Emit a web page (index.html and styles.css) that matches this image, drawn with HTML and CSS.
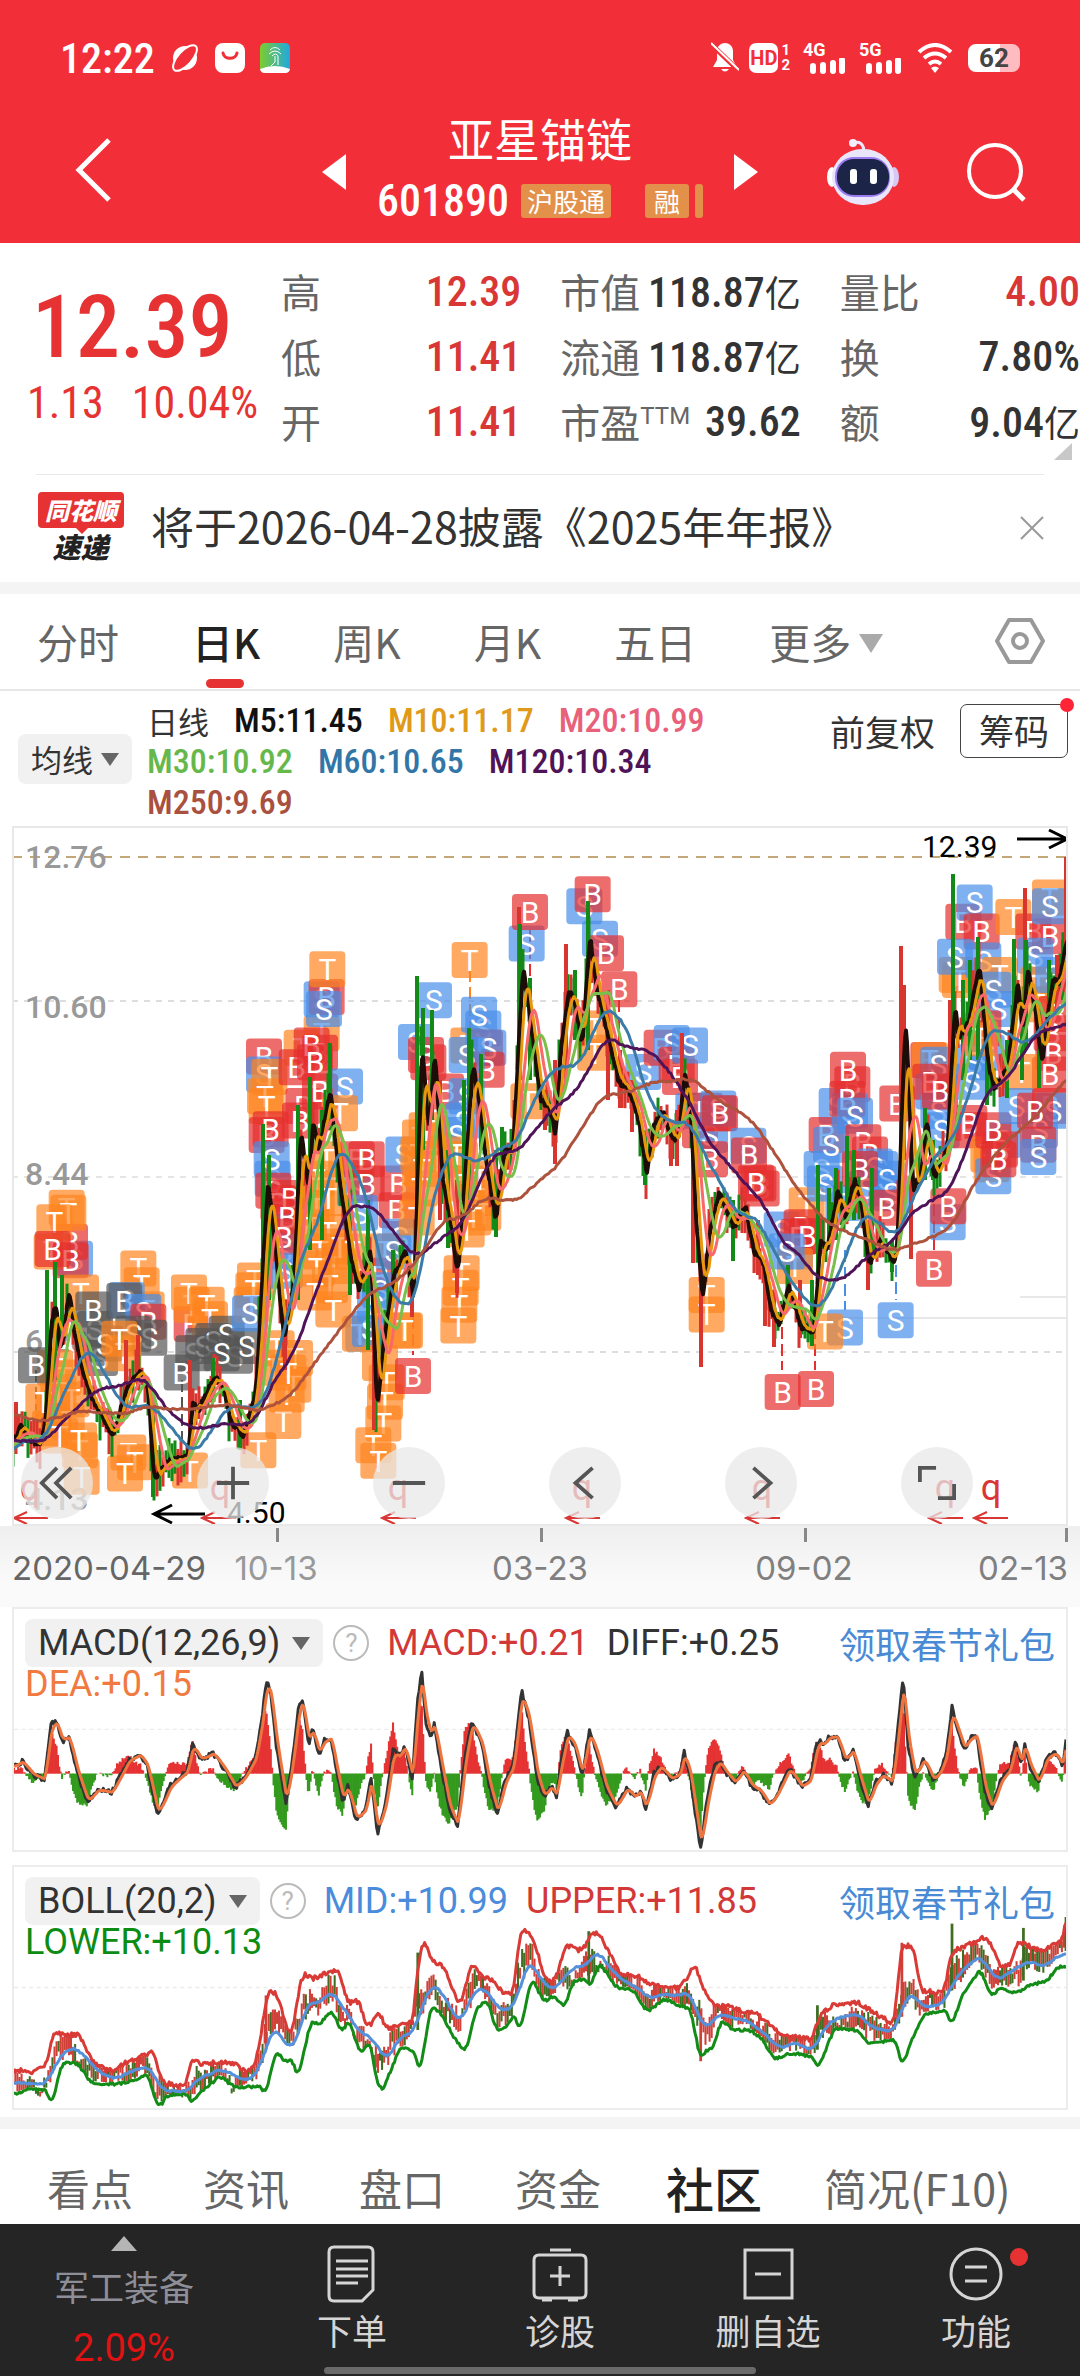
FILE: index.html
```
<!DOCTYPE html>
<html lang="zh-CN">
<head>
    <meta charset="UTF-8">
    <meta name="viewport" content="width=device-width, initial-scale=1.0">
    <title>亚星锚链 601890</title>
    <link rel="stylesheet" href="styles.css">
</head>
<body>
    <header class="top">
        <div class="status-bar">
            <span class="clock">12:22</span>
            <svg width="30" height="30" viewBox="0 0 30 30"><circle cx="15" cy="15" r="12" fill="#fff"/><ellipse cx="15" cy="15" rx="16" ry="7" transform="rotate(-48 15 15)" fill="#f22f38" stroke="#fff" stroke-width="2"/></svg>
            <svg width="30" height="30" viewBox="0 0 30 30"><rect width="30" height="30" rx="8" fill="#fff"/><path d="M8 10c1 7 13 7 14 0" fill="none" stroke="#f22f38" stroke-width="3" stroke-linecap="round"/></svg>
            <svg width="30" height="30" viewBox="0 0 30 30">
                <defs><linearGradient id="app"><stop offset="0" stop-color="#7dcc2e"/><stop offset="1" stop-color="#1fa9e0"/></linearGradient></defs>
                <rect width="30" height="30" rx="5" fill="url(#app)"/><path d="M0 26q15-6 30 0a5 5 0 0 1-5 4H5a5 5 0 0 1-5-4z" fill="#fff"/>
                <path d="M10 7q5-5 10 0M9 11q6-6 12 0M12 13q4-4 6 0v9M15 13v6l-4 4" fill="none" stroke="#fff"/>
            </svg>
            <span class="spacer"></span>
            <svg width="28" height="32" viewBox="0 0 28 32"><path d="M14 1c-4 0-8 3-8 8v9l-4 7h24l-4-7V9c0-5-4-8-8-8zM10 27q4 5 8 0z" fill="#fff"/><path d="M1 3l26 25" stroke="#f22f38" stroke-width="5"/><path d="M0 1l28 27" stroke="#fff" stroke-width="2"/></svg>
            <span class="hd">HD</span><span class="sims"><i>1</i><i>2</i></span>
            <span class="signal"><b>4G</b><svg width="36" height="16" viewBox="0 0 36 16"><path d="M3 13v-5M13 13V7M23 13V5M32 13V2" stroke="#fff" stroke-width="6" stroke-linecap="round"/></svg></span>
            <span class="signal"><b>5G</b><svg width="36" height="16" viewBox="0 0 36 16"><path d="M3 13v-5M13 13V7M23 13V5M32 13V2" stroke="#fff" stroke-width="6" stroke-linecap="round"/></svg></span>
            <svg width="36" height="30" viewBox="0 0 36 30"><path d="M2 9q16-14 32 0M7 15q11-9 22 0M12 21q6-5 12 0" fill="none" stroke="#fff" stroke-width="4"/><path d="M14 25q4-3 8 0l-4 5z" fill="#fff"/></svg>
            <span class="battery">62</span>
        </div>
        <div class="title-bar">
            <button class="back" aria-label="返回"><svg width="40" height="68" viewBox="0 0 40 68"><path d="M36 4L6 34l30 30" fill="none" stroke="#fff" stroke-width="5"/></svg></button>
            <div class="stock-nav">
                <button aria-label="上一只"><svg width="24" height="36" viewBox="0 0 24 36"><path d="M24 0v36L0 18z" fill="#fff"/></svg></button>
                <div class="stock">
                    <h1>亚星锚链</h1>
                    <div class="code"><span>601890</span><em>沪股通</em><em class="margin-tag">融</em><em class="cut"></em></div>
                </div>
                <button aria-label="下一只"><svg width="24" height="36" viewBox="0 0 24 36"><path d="M0 0v36l24-18z" fill="#fff"/></svg></button>
            </div>
            <button class="robot" aria-label="智能助手">
                <svg width="72" height="68" viewBox="0 0 72 68">
                    <path d="M26 5q10-3 11 8" fill="none" stroke="#eee8fb" stroke-width="3"/><circle cx="26" cy="5" r="4" fill="#f3eefb"/>
                    <ellipse cx="5" cy="39" rx="5" ry="10" fill="#fff"/><ellipse cx="67" cy="39" rx="5" ry="10" fill="#d5c8f5"/>
                    <rect x="5" y="11" width="62" height="56" rx="30" fill="#e9e5fb"/>
                    <rect x="8" y="19" width="55" height="40" rx="19" fill="#9b7bf0"/><rect x="10" y="21" width="52" height="36" rx="17" fill="#1c2548"/>
                    <rect x="23" y="31" width="7" height="15" rx="3" fill="#fff"/><rect x="43" y="31" width="7" height="15" rx="3" fill="#fff"/>
                </svg>
            </button>
            <button aria-label="搜索"><svg width="60" height="60" viewBox="0 0 60 60"><circle cx="29" cy="29" r="26" fill="none" stroke="#fff" stroke-width="4"/><path d="M47 47l11 11" stroke="#fff" stroke-width="5"/></svg></button>
        </div>
    </header>

    <section class="quote">
        <div class="price">
            <strong>12.39</strong>
            <div><span>1.13</span><span>10.04%</span></div>
        </div>
        <dl class="stats">
            <div><dt>高</dt><dd class="up">12.39</dd></div>
            <div><dt>市值</dt><dd>118.87<small>亿</small></dd></div>
            <div><dt>量比</dt><dd class="up">4.00</dd></div>
            <div><dt>低</dt><dd class="up">11.41</dd></div>
            <div><dt>流通</dt><dd>118.87<small>亿</small></dd></div>
            <div><dt>换</dt><dd>7.80%</dd></div>
            <div><dt>开</dt><dd class="up">11.41</dd></div>
            <div><dt>市盈<sup>TTM</sup></dt><dd>39.62</dd></div>
            <div><dt>额</dt><dd>9.04<small>亿</small></dd></div>
        </dl>
        <svg class="corner" width="18" height="17" viewBox="0 0 18 17"><path d="M18 0v17H0z" fill="#c8c8c8"/></svg>
    </section>

    <section class="notice">
        <div class="notice-logo"><b>同花顺</b><i>速递</i></div>
        <a href="#">将于2026-04-28披露《2025年年报》</a>
        <button aria-label="关闭"><svg width="24" height="24" viewBox="0 0 24 24"><path d="M1 1l22 22M23 1L1 23" stroke="#999" stroke-width="2"/></svg></button>
    </section>

    <nav class="period-tabs">
        <a href="#">分时</a>
        <a href="#" class="active">日K</a>
        <a href="#">周K</a>
        <a href="#">月K</a>
        <a href="#">五日</a>
        <a href="#" class="more">更多<svg width="24" height="19" viewBox="0 0 24 19"><path d="M0 0h24L12 19z" fill="#aaa"/></svg></a>
        <button aria-label="设置"><svg width="50" height="46" viewBox="0 0 50 46"><path d="M14 2h22l12 21-12 21H14L2 23z" fill="none" stroke="#999" stroke-width="4" stroke-linejoin="round"/><circle cx="25" cy="23" r="7" fill="none" stroke="#999" stroke-width="4"/></svg></button>
    </nav>

    <section class="ma-bar">
        <button class="picker">均线<svg width="18" height="13" viewBox="0 0 18 13"><path d="M0 0h18L9 13z" fill="#666"/></svg></button>
        <div class="ma-list">
            <span>日线</span>
            <span class="m5">M5:11.45</span>
            <span class="m10">M10:11.17</span>
            <span class="m20">M20:10.99</span>
            <span class="m30">M30:10.92</span>
            <span class="m60">M60:10.65</span>
            <span class="m120">M120:10.34</span>
            <span class="m250">M250:9.69</span>
        </div>
        <button class="adjust">前复权</button>
        <button class="chips">筹码</button>
    </section>

    <section class="kline">
        <svg id="kline" viewBox="12 826 1056 700"></svg>
        <div class="chart-tools">
            <button aria-label="最左"><svg viewBox="0 0 40 40"><path d="M20 4L4 20l16 16M35 4L19 20l16 16"/></svg></button>
            <button aria-label="放大"><svg viewBox="0 0 40 40"><path d="M20 3v34M3 20h34"/></svg></button>
            <button aria-label="缩小"><svg viewBox="0 0 40 40"><path d="M3 20h34"/></svg></button>
            <button aria-label="左移"><svg viewBox="0 0 40 40"><path d="M28 4L10 20l18 16"/></svg></button>
            <button aria-label="右移"><svg viewBox="0 0 40 40"><path d="M12 4l18 16-18 16"/></svg></button>
            <button aria-label="全屏"><svg viewBox="0 0 40 40"><path d="M2 19V4h17M38 21v15H21"/></svg></button>
        </div>
    </section>
    <div class="dates">
        <span>2020-04-29</span><span>10-13</span><span>03-23</span><span>09-02</span><span>02-13</span>
    </div>

    <section class="panel">
        <svg id="macd" viewBox="18 80 1532 735" preserveAspectRatio="none"></svg>
        <div class="panel-head">
            <button class="picker">MACD(12,26,9)<svg width="18" height="13" viewBox="0 0 18 13"><path d="M0 0h18L9 13z" fill="#666"/></svg></button>
            <button class="help">?</button>
            <span class="red">MACD:+0.21</span>
            <span>DIFF:+0.25</span>
            <a href="#">领取春节礼包</a>
        </div>
        <div class="panel-sub orange">DEA:+0.15</div>
    </section>

    <section class="panel">
        <svg id="boll" viewBox="18 45 1532 732" preserveAspectRatio="none"></svg>
        <div class="panel-head">
            <button class="picker">BOLL(20,2)<svg width="18" height="13" viewBox="0 0 18 13"><path d="M0 0h18L9 13z" fill="#666"/></svg></button>
            <button class="help">?</button>
            <span class="blue">MID:+10.99</span>
            <span class="red">UPPER:+11.85</span>
            <a href="#">领取春节礼包</a>
        </div>
        <div class="panel-sub green">LOWER:+10.13</div>
    </section>

    <nav class="info-tabs">
        <a href="#">看点</a>
        <a href="#">资讯</a>
        <a href="#">盘口</a>
        <a href="#">资金</a>
        <a href="#" class="active">社区</a>
        <a href="#" class="last">简况(F10)</a>
    </nav>

    <footer class="bottom-bar">
        <a href="#" class="sector">
            <svg width="26" height="15" viewBox="0 0 26 15"><path d="M13 0l13 15H0z" fill="#b5b5b5"/></svg>
            <span>军工装备</span>
            <b>2.09%</b>
        </a>
        <button><svg width="56" height="60" viewBox="0 0 56 60"><path d="M10 3h34q5 0 5 5v38L38 57H10q-5 0-5-5V8q0-5 5-5zM12 17h32M12 25h32M12 32h32M12 39h22"/></svg>下单</button>
        <button><svg width="56" height="60" viewBox="0 0 56 60"><path d="M18 6h21M7 11h42q5 0 5 5v33q0 5-5 5H7q-5 0-5-5V16q0-5 5-5zM28 22v20M18 32h20M10 56h10M36 56h10"/></svg>诊股</button>
        <button><svg width="56" height="60" viewBox="0 0 56 60"><path d="M5 6h47v48H5zM15 30h26"/></svg>删自选</button>
        <button class="dot"><svg width="56" height="60" viewBox="0 0 56 60"><circle cx="28" cy="30" r="25"/><path d="M17 23h22M17 37h22"/></svg>功能</button>
        <i class="home-bar"></i>
    </footer>
    <script src="chart.js"></script>
</body>
</html>
```
FILE: styles.css
```
* {
    box-sizing: border-box;
}

body {
    margin: 0;
    font-family: Roboto, 'Noto Sans CJK SC', sans-serif;
    background: #fff;
    color: #333;
}

button {
    border: none;
    background: none;
    padding: 0;
    color: inherit;
    font: inherit;
    display: flex;
    align-items: center;
    justify-content: center;
}

a {
    color: inherit;
    text-decoration: none;
}

h1, dl, dd {
    margin: 0;
}

i, em {
    font-style: normal;
}

/* header */
.top {
    background: #f22f38;
    color: #fff;
    height: 243px;
    padding-top: 38px;
}

.status-bar {
    display: flex;
    align-items: center;
    gap: 15px;
    height: 40px;
    padding: 0 60px;
}

.clock {
    font: 500 42px 'Roboto Condensed', sans-serif;
}

.spacer {
    flex: 1;
}

.hd {
    background: #fff;
    color: #f22f38;
    border-radius: 7px;
    font: 700 20px/30px Roboto, sans-serif;
    padding: 0 1px;
    margin-left: -5px;
}

.sims {
    display: flex;
    flex-direction: column;
    font: 700 15px/15px Roboto, sans-serif;
    margin-left: -12px;
}

.signal {
    position: relative;
    width: 43px;
    height: 32px;
    font: 18px/16px Roboto, sans-serif;
    margin-left: -2px;
}

.signal b {
    display: block;
}

.signal svg {
    position: absolute;
    right: 0;
    bottom: 0;
}

.battery {
    width: 52px;
    height: 28px;
    border-radius: 8px;
    background: linear-gradient(90deg, #fff 62%, #ffbcc0 62%);
    color: #444;
    font: 700 26px/28px 'Roboto', sans-serif;
    text-align: center;
}

.title-bar {
    display: flex;
    align-items: center;
    padding: 35px 54px 0 73px;
}

.title-bar .back {
    padding-bottom: 4px;
}

.stock-nav {
    display: flex;
    align-items: center;
    justify-content: space-between;
    width: 436px;
    margin-left: 209px;
}

.stock {
    text-align: center;
}

h1 {
    font-size: 46px;
    line-height: 56px;
    font-weight: 400;
}

.code {
    display: flex;
    align-items: center;
    font: 500 44px/60px 'Roboto Condensed', sans-serif;
    padding-top: 2px;
}

.code em {
    background: #e2904a;
    font: 26px/34px 'Noto Sans CJK SC', sans-serif;
    border-radius: 3px;
    padding: 0 6px;
    margin-left: 12px;
}

.code .margin-tag {
    padding: 0 9px;
    margin-left: 34px;
}

.code .cut {
    width: 8px;
    height: 34px;
    padding: 0;
    margin-left: 6px;
}

.title-bar .robot {
    margin: 0 67px 0 auto;
}

/* quote */
.quote {
    position: relative;
    display: flex;
    height: 231px;
    padding-top: 16px;
    font-family: 'Roboto Condensed', 'Noto Sans CJK SC', sans-serif;
}

.price {
    width: 281px;
    color: #e63232;
}

.price strong {
    display: block;
    font-size: 88px;
    line-height: 112px;
    font-weight: 500;
    padding: 12px 0 0 32px;
}

.price div {
    display: flex;
    gap: 28px;
    padding-left: 27px;
    font-size: 44px;
    line-height: 40px;
}

.stats {
    flex: 1;
    display: grid;
    grid-template-columns: 1fr 1fr 1fr;
    column-gap: 39px;
    align-content: start;
}

.stats div {
    display: flex;
    justify-content: space-between;
    align-items: center;
    height: 65px;
}

.stats dt {
    font-family: 'Noto Sans CJK SC', sans-serif;
    font-size: 40px;
    line-height: 56px;
    padding-bottom: 2px;
    color: #666;
    white-space: nowrap;
}

.stats sup {
    font: 24px Roboto, sans-serif;
    vertical-align: 14px;
}

.stats dd {
    font-size: 42px;
    font-weight: 500;
    white-space: nowrap;
}

.stats small {
    font: 36px/50px 'Noto Sans CJK SC', sans-serif;
}

.up {
    color: #d93636;
}

.corner {
    position: absolute;
    right: 8px;
    bottom: 14px;
}

/* notice */
.notice {
    display: flex;
    align-items: center;
    height: 108px;
    padding: 0 36px 0 0;
    margin-left: 36px;
    position: relative;
    font-size: 43px;
}

.notice::before {
    content: "";
    position: absolute;
    top: 0;
    left: 0;
    right: 36px;
    border-top: 1px solid #e8e8e8;
}

.notice a {
    flex: 1;
    padding: 0 0 6px 26px;
    font-family: 'Noto Sans CJK SC', sans-serif;
}

.notice-logo {
    width: 89px;
    font: 900 28px/36px 'Noto Sans CJK SC', sans-serif;
    text-align: center;
}

.notice-logo b {
    position: relative;
    display: block;
    width: 86px;
    height: 36px;
    background: #e63232;
    color: #fff;
    border-radius: 4px;
    font-size: 24px;
    font-style: italic;
    line-height: 36px;
    margin-left: 2px;
}

.notice-logo b::after {
    content: "";
    position: absolute;
    left: 38px;
    top: 36px;
    border: 6px solid transparent;
    border-top-color: #e63232;
}

.notice-logo i {
    display: block;
    font-style: italic;
    color: #222;
}

/* period tabs */
.period-tabs {
    display: flex;
    align-items: center;
    gap: 73px;
    height: 109px;
    padding: 0 35px 2px 37px;
    border-top: 12px solid #f4f4f4;
    border-bottom: 2px solid #e6e6e6;
    font: 41px 'Noto Sans CJK SC', sans-serif;
    color: #666;
}

.period-tabs a {
    position: relative;
    white-space: nowrap;
}

.period-tabs .active {
    color: #222;
    font-weight: 500;
}

.period-tabs .active::after {
    content: "";
    position: absolute;
    left: 50%;
    bottom: -17px;
    width: 38px;
    height: 9px;
    margin-left: -20px;
    border-radius: 5px;
    background: #e63232;
}

.period-tabs .more svg {
    margin-left: 8px;
    vertical-align: 6px;
}

.period-tabs button {
    margin-left: auto;
}

/* moving averages */
.ma-bar {
    display: flex;
    height: 135px;
    padding: 0 12px 0 18px;
    font-size: 34px;
}

.picker {
    background: #f1f1f1;
    border-radius: 8px;
    gap: 8px;
    white-space: nowrap;
}

.ma-bar .picker {
    align-self: flex-start;
    width: 114px;
    height: 50px;
    margin-top: 43px;
    font: 31px/44px 'Noto Sans CJK SC', sans-serif;
}

.ma-list {
    flex: 1;
    display: flex;
    flex-wrap: wrap;
    align-content: flex-start;
    column-gap: 25px;
    max-width: 620px;
    padding: 9px 0 0 15px;
    font: 500 34px/41px 'Roboto Condensed', 'Noto Sans CJK SC', sans-serif;
}

.ma-list span:first-child {
    font: 31px/41px 'Noto Sans CJK SC', sans-serif;
}

.m5 { color: #111; }
.m10 { color: #e09a1a; }
.m20 { color: #e8607a; }
.m30 { color: #66b84a; }
.m60 { color: #3276a8; }
.m120 { color: #4f1458; }
.m250 { color: #a9503f; }

.adjust {
    font-family: 'Noto Sans CJK SC', sans-serif;
    height: 54px;
    margin: 12px 25px 0 auto;
    font-size: 35px;
    white-space: nowrap;
}

.chips {
    position: relative;
    width: 108px;
    height: 54px;
    margin-top: 13px;
    padding-bottom: 3px;
    border: 1px solid #444;
    border-radius: 7px;
    font: 35px 'Noto Sans CJK SC', sans-serif;
}

.chips::after {
    content: "";
    position: absolute;
    right: -7px;
    top: -7px;
    width: 14px;
    height: 14px;
    border-radius: 50%;
    background: #ff2436;
}

/* k line */
.kline {
    position: relative;
    margin: 0 12px;
}

.kline > svg {
    display: block;
    width: 100%;
    font-family: Roboto, sans-serif;
}

.chart-tools {
    position: absolute;
    left: 9px;
    right: 95px;
    bottom: 7px;
    display: flex;
    justify-content: space-between;
}

.chart-tools button {
    width: 72px;
    height: 72px;
    border-radius: 50%;
    background: rgba(232, 232, 232, 0.75);
}

.chart-tools svg {
    width: 38px;
    fill: none;
    stroke: #555;
    stroke-width: 4;
}

.dates {
    display: grid;
    grid-template-columns: 214fr 100fr 428fr 100fr 214fr;
    height: 81px;
    padding: 0 12px;
    font: 33px/84px Inter, sans-serif;
    color: #808080;
    text-align: center;
    white-space: nowrap;
    background: linear-gradient(#efefef, #fafafa 70%);
}

.dates span {
    position: relative;
}

.dates span:first-child {
    color: #666;
    text-align: left;
}

.dates span:nth-child(2) {
    color: #999;
}

.dates span:last-child {
    text-align: right;
}

.dates span + span::before {
    content: "";
    position: absolute;
    top: 2px;
    left: 50%;
    width: 3px;
    height: 14px;
    background: #888;
}

.dates span:last-child::before {
    left: auto;
    right: 0;
}

/* indicator panels */
.panel {
    position: relative;
    height: 245px;
    margin: 0 12px 13px;
    border: 2px solid #ececec;
    padding: 10px 11px;
    font-size: 36px;
}

.panel > svg {
    position: absolute;
    left: 0;
    top: 0;
    width: 100%;
    height: 100%;
}

.panel-head {
    position: relative;
    display: flex;
    align-items: center;
    gap: 18px;
    height: 48px;
    white-space: nowrap;
}

.panel-head .picker {
    height: 48px;
    padding: 0 13px;
    gap: 12px;
}

.help {
    width: 36px;
    height: 36px;
    border: 2px solid #bbb;
    border-radius: 50%;
    color: #bbb;
    font-size: 26px;
    margin: 0 0 0 -8px;
}

.panel-head a {
    margin-left: auto;
    color: #4a8ad4;
}

.panel-sub {
    position: relative;
    line-height: 34px;
}

.red { color: #d23838; }
.orange { color: #f07a40; }
.blue { color: #4a8cdb; }
.green { color: #0c8c12; }

/* info tabs */
.info-tabs {
    display: grid;
    grid-template-columns: repeat(5, 156px) 1fr;
    align-items: center;
    height: 107px;
    margin-top: -6px;
    padding-left: 12px;
    padding-top: 20px;
    border-top: 12px solid #f4f4f4;
    font: 43px/60px 'Noto Sans CJK SC', sans-serif;
    color: #666;
    text-align: center;
}

.info-tabs .active {
    font-size: 48px;
    font-weight: 500;
    color: #222;
}

.info-tabs .last {
    text-align: left;
    padding-left: 32px;
}

/* bottom bar */
.bottom-bar {
    position: relative;
    display: grid;
    grid-template-columns: 248px repeat(4, 1fr);
    height: 153px;
    background: #252525;
    color: #d5d5d5;
    font-size: 35px;
}

.bottom-bar button {
    position: relative;
    flex-direction: column;
    justify-content: flex-start;
    padding-top: 20px;
}

.bottom-bar button svg {
    fill: none;
    stroke: #d5d5d5;
    stroke-width: 3;
}

.dot::after {
    content: "";
    position: absolute;
    left: 138px;
    top: 24px;
    width: 18px;
    height: 18px;
    border-radius: 50%;
    background: #e63232;
}

.sector {
    display: flex;
    flex-direction: column;
    align-items: center;
    padding-top: 12px;
    color: #8e8e98;
    line-height: 58px;
}

.sector span {
    margin-top: 10px;
}

.sector b {
    color: #e01212;
    font-weight: 400;
    font-size: 38px;
}

.home-bar {
    position: absolute;
    left: 30%;
    right: 30%;
    bottom: 3px;
    height: 7px;
    border-radius: 4px;
    background: #6a6a6a;
}
```
FILE: chart.js
```
const NS = 'http://www.w3.org/2000/svg';

function add(svg, tag, attrs, text) {
    const el = document.createElementNS(NS, tag);
    for (const key in attrs) el.setAttribute(key, attrs[key]);
    if (text) el.textContent = text;
    svg.appendChild(el);
    return el;
}

function pairs(str) {
    return str.trim().split(/\s+/).map(p => p.split(',').map(Number));
}

// linear interpolation over a list of [x, y]
function sample(points, x) {
    if (x <= points[0][0]) return points[0][1];
    for (let i = 1; i < points.length; i++) {
        const [x1, y1] = points[i];
        const [x0, y0] = points[i - 1];
        if (x <= x1) return y0 + (y1 - y0) * (x - x0) / (x1 - x0 || 1);
    }
    return points[points.length - 1][1];
}

let seed = 7;
function rnd() {
    seed = (seed * 16807) % 2147483647;
    return seed / 2147483647;
}

// resample with a centred window so the corners come out round
function smooth(points, reach, noise) {
    const out = [];
    const last = points[points.length - 1][0];
    for (let x = points[0][0]; x <= last; x += 2) {
        let sum = 0;
        for (let i = -2; i <= 2; i++) sum += sample(points, x + i * reach / 2);
        out.push([x, (sum / 5 + (rnd() - 0.5) * noise).toFixed(1)]);
    }
    return out;
}

function line(svg, points, color, width) {
    add(svg, 'polyline', {
        points: points.map(p => p.join(',')).join(' '),
        fill: 'none', stroke: color, 'stroke-width': width,
        'stroke-linejoin': 'round', 'vector-effect': 'non-scaling-stroke'
    });
}

// every third of the chart has its own grid, 1080 units wide
function grid(third, x, y) {
    return [third * 360 + x / 3, 820 + y / 2.063];
}

const price = pairs(`12,1445 20,1423 27,1438 40,1445 45,1420 50,1330 55,1300 59,1350 63,1335 68,1290 73,1329 83,1377 93,1402
    112,1436 125,1392 138,1370 147,1385 153,1478 160,1470 167,1462 187,1458 192,1400 197,1411 205,1395 213,1377 222,1385 230,1421
    243,1436 255,1392 260,1305 267,1180 273,1232 283,1339 293,1285 300,1130 308,1193 312,1120 318,1150 330,1087 333,1130 340,1188
    350,1256 358,1290 364,1270 370,1250 376,1410 383,1343 393,1276 405,1251 413,1300 421,1048 428,1130 434,1050 442,1183 450,1222
    457,1275 464,1180 472,1065 480,1111 485,1159 495,1220 503,1150 512,1154 517,1062 522,965 528,1009 540,1101 548,1105 555,1135
    560,1048 568,990 575,1005 581,1048 589,935 595,985 608,1038 618,1082 627,1087 637,1116 646,1175 653,1125 662,1111 672,1140
    678,1135 684,1070 690,1111 695,1217 702,1300 708,1237 718,1193 726,1210 733,1227 745,1208 753,1251 762,1261 770,1310 778,1325
    788,1285 800,1326 813,1332 820,1237 826,1250 837,1190 845,1222 853,1179 860,1200 868,1265 880,1239 893,1264 897,1237 902,1080
    905,1015 912,1190 920,1174 926,1120 933,1180 947,1145 954,1005 958,1038 967,1024 979,965 987,1062 993,1090 1007,1067 1017,982
    1022,1033 1027,965 1035,1014 1041,1062 1052,978 1058,985 1064,950 1067,936`);

const m60 = [
    '38,1300 80,1275 130,1285 190,1185 265,1080 320,1150 375,1215 450,1205 500,1240 580,1310 620,1275 690,1205 770,1215 800,1190 860,1030 915,870 950,850 1000,700 1025,675 1050,700 1080,745',
    '20,770 60,915 110,1000 170,997 200,840 250,705 290,680 325,705 400,695 430,665 465,680 500,610 560,530 605,505 660,510 720,400 745,385 805,430 860,570 920,625 990,620 1040,700',
    '0,745 60,825 90,807 130,845 200,940 290,1017 350,950 425,812 470,825 535,865 570,790 670,665 690,680 750,560 800,440 825,428 890,450 912,470 960,430 1042,372'
];
const m120 = [
    '38,1280 135,1283 210,1225 290,1175 380,1165 415,1148 450,1165 510,1225 580,1257 680,1245 740,1250 780,1225 820,1155 880,1105 960,950 1050,788 1080,800',
    '40,795 100,850 170,905 230,870 310,832 380,710 430,680 465,690 520,645 580,595 650,560 740,445 790,467 870,475 930,520 1000,595 1050,670',
    '0,690 70,745 140,800 190,880 225,885 290,945 340,950 380,945 440,900 530,865 570,810 690,765 750,660 800,555 850,545 950,440 1042,420'
];
const m250 = [
    '38,1225 120,1242 240,1220 380,1225 440,1208 540,1218 690,1205 780,1220 870,1190 960,1105 1070,1005',
    '30,975 90,960 160,920 250,825 310,820 370,778 470,787 520,755 600,710 660,640 730,567 800,563 880,540 940,540 990,530 1060,570',
    '0,580 80,610 130,650 220,750 310,825 360,845 420,860 520,890 600,870 690,845 770,740 850,670 950,610 1042,530'
];

// long candles: x, top, bottom, r(ise) / g(reen)
const spikes = `16,1402,1440,r 47,1270,1420,g 55,1262,1380,g 62,1275,1340,g 126,1340,1410,r 138,1335,1390,r 153,1400,1497,g
    190,1360,1440,r 213,1358,1400,g 240,1400,1450,g 263,1124,1300,g 269,1155,1300,g 285,1300,1370,r 298,1105,1300,g 310,1077,1250,g
    322,1110,1240,g 330,1043,1130,g 350,1190,1295,g 368,1200,1350,g 374,1300,1430,r 393,1250,1300,g 412,1270,1317,r 417,976,1200,g
    423,1008,1150,g 432,1010,1120,g 440,1080,1220,r 448,1150,1248,g 457,1180,1293,r 464,1080,1200,g 469,1028,1200,g 481,1054,1150,g
    496,1150,1237,g 502,1127,1180,g 519,907,1100,r 520,924,1080,g 530,978,1080,g 545,1090,1130,r 555,1060,1164,r 566,944,1080,r
    575,970,1040,g 588,901,1050,g 608,990,1100,r 620,1050,1108,r 632,1080,1132,r 645,1130,1185,g 671,1120,1166,r 677,1110,1166,r
    682,1033,1130,r 693,1110,1263,r 701,1250,1367,r 733,1200,1261,g 758,1220,1275,r 765,1260,1326,r 774,1290,1347,r 788,1265,1300,g
    800,1280,1338,r 812,1280,1346,g 818,1165,1300,g 829,1188,1250,g 836,1168,1240,g 847,1136,1220,g 854,1150,1220,g 868,1220,1290,r
    872,1168,1260,g 892,1240,1272,g 901,946,1200,r 904,985,1160,r 911,1120,1259,r 925,1108,1180,g 933,1140,1180,g 950,1000,1150,r
    953,874,1140,g 963,980,1080,g 970,960,1060,g 978,937,1060,g 987,1020,1105,g 1007,1040,1098,g 1014,939,1050,g 1022,1000,1080,g
    1025,888,1050,r 1026,940,1050,g 1039,1010,1088,g 1049,960,1030,g 1057,955,1010,r 1063,940,1000,g 1066,857,1000,r`;

// buy / sell / trade marks per third: letter,x,y ; lower case is a grey one
const marks = [
    `T,160,1220 T,150,1255 T,200,1240 T,190,1150 T,215,1195 T,175,1180 T,240,1300 T,180,1270 T,165,1130 T,130,1200 T,245,1355 T,237,1280
    S,225,905 B,210,870 T,200,800 T,205,810 T,163,830 T,155,890 B,212,908 B,158,885 T,243,975 b,108,1125 s,300,1110 s,285,1050 s,315,1080 b,280,1010
    T,415,925 T,425,960 T,440,1010 S,380,990 b,373,992 S,430,1015 B,445,1035 s,448,1068 s,400,1060 T,370,1100 T,358,1070 T,385,1305 T,405,1325 T,375,1348
    B,575,1040 T,575,1000 T,567,975 T,620,1000 T,630,1030 s,580,1100 b,545,1140 s,610,1085 s,640,1075 s,680,1060 s,705,1105 s,740,1085 s,665,1100 T,570,1342
    T,765,950 T,760,970 T,755,1000 S,750,1018 T,775,1300 T,850,1240 T,860,1185 T,880,1165 T,885,1110 T,830,1090 T,820,1130 T,865,1140
    B,792,488 S,792,525 T,808,530 T,795,570 T,800,590 B,800,650 B,812,638 S,818,740 S,815,700 B,820,765 B,835,790 B,870,780 S,860,850 B,862,818 S,850,890 B,850,860 S,855,930
    T,965,440 T,905,470 S,965,370 B,980,365 T,982,308 S,972,390 B,960,480 B,890,510 B,935,465 B,945,500 B,910,590 B,900,620 B,960,560 T,980,700 T,950,740 T,950,800 T,985,780
    T,935,840 T,985,850 T,960,890 T,1000,920 T,950,925 T,990,960 T,945,975 T,1000,1010 T,1020,880 S,1035,550 T,1020,605 S,1065,760 B,1070,700 T,1060,890`,
    `S,10,1060 T,0,1060 B,20,700 B,20,750 S,0,810 B,115,750 B,110,805 S,130,690 S,120,860 T,75,890 B,60,940 S,60,970 S,30,1050 S,45,1000 T,60,1120 T,80,1160 T,75,1200 T,70,1245 T,40,1290 T,55,1322 S,100,890
    T,180,655 T,175,690 T,185,720 T,180,760 T,170,820 B,205,500 S,168,458 B,198,485 S,222,372 B,258,560 T,200,640 T,130,1053 T,135,1053
    T,325,465 S,370,430 S,357,402 B,375,470 S,385,470 B,380,515 S,320,485 S,320,570 S,310,620 S,290,650 T,300,700 T,320,750 T,350,780 T,370,810 T,340,820 T,320,845 T,290,690 T,360,740
    T,305,935 T,302,965 T,298,1000 T,295,1043 T,329,289 B,159,1147
    S,500,255 B,510,190 T,505,580 S,673,178 S,720,245 B,698,153 B,738,275 B,778,349 T,705,430 T,705,480
    S,850,520 B,905,470 S,935,460 B,950,505 B,960,530 S,990,465 S,1000,600 B,1035,600 B,1020,640 S,1050,650 B,1050,700 B,1075,605 T,1040,980 T,1040,1020`,
    `S,-5,595 B,0,605 S,85,672 B,87,692 B,125,760 B,115,750 B,108,748 S,185,845 T,260,795 S,225,890 B,245,840 B,235,860 B,262,858 T,225,920 S,200,890 S,350,590 B,320,650 S,305,720 S,333,670 S,315,750
    B,397,545 S,390,600 B,382,575 S,405,610 B,384,515 B,430,665 B,450,690 S,480,720 S,465,715 S,440,760 S,500,740 S,515,770 B,500,800 S,370,790 B,420,720 B,532,585 B,188,1180 B,288,1174 S,375,1047 T,315,1055 S,527,1032
    B,625,495 T,630,495 S,655,505 S,640,560 B,631,540 S,655,600 B,660,560 B,642,926 S,683,830 B,685,797 S,665,640
    B,730,210 S,764,170 B,785,230 T,710,320 T,720,330 S,705,282 S,790,290 T,840,320 S,820,350 S,835,390 S,800,480 B,790,430 S,760,500 T,780,450 S,755,540 B,745,640 B,748,625
    T,805,690 T,815,710 S,820,735 S,850,660 B,840,680 B,835,700 B,820,640 T,880,200 B,940,230 T,990,160 B,990,240 S,990,178 S,945,280 T,955,340 T,950,380 S,1000,320 B,1010,400 B,995,440 B,1000,480 B,990,525
    T,905,520 S,890,590 B,990,590 S,1000,600 S,960,640 B,945,600 B,955,670 S,955,695`
];
const markColors = { T: '#ff8420', B: '#e62e2e', S: '#488fe8', b: '#555', s: '#555' };

function drawKline() {
    const svg = document.getElementById('kline');
    const textColor = '#999';

    [[857, '#c2a878', '10 8'], [1001, '#ddd', '6 6'], [1177, '#e5e5e5', '6 6'], [1352, '#ddd', '6 6']].forEach(([y, stroke, dash]) =>
        add(svg, 'path', { d: `M12 ${y}h1056`, stroke, 'stroke-width': 2, 'stroke-dasharray': dash }));
    add(svg, 'path', { d: 'M1020 1297h48M830 1318h238', stroke: '#e8e8e8', 'stroke-width': 2 });
    [['12.76', 868], ['10.60', 1018], ['8.44', 1185], ['6.28', 1352], ['4.13', 1510]].forEach(([label, y]) =>
        add(svg, 'text', { x: 25, y, fill: textColor, 'font-size': 32, 'font-weight': 500 }, label));

    // stems of the lone marks
    [[782, 1310, 1370, 'B'], [815, 1310, 1370, 'B'], [845, 1250, 1310, 'S'], [896, 1265, 1300, 'S'], [934, 1170, 1250, 'B'],
        [470, 970, 1060, 'T'], [413, 1300, 1355, 'B'], [530, 930, 980, 'B'], [619, 1000, 1060, 'B'], [36, 1370, 1410, 's'], [182, 1380, 1440, 's']].forEach(([x, y1, y2, type]) =>
        add(svg, 'path', { d: `M${x} ${y1}V${y2}`, stroke: markColors[type], 'stroke-width': 2, 'stroke-dasharray': '12 5' }));

    marks.forEach((list, third) => list.trim().split(/\s+/).forEach(item => {
        const [type, gx, gy] = item.split(',');
        const [x, y] = grid(third, +gx, +gy);
        add(svg, 'rect', { x: x - 18, y: y - 18, width: 36, height: 36, rx: 4, fill: markColors[type], 'fill-opacity': 0.7 });
        add(svg, 'text', { x, y: y + 11, fill: '#fff', 'font-size': 30, 'text-anchor': 'middle' }, type.toUpperCase());
    }));

    for (let x = 13; x < 1067; x += 3) {
        const y = sample(price, x);
        const up = 4 + rnd() * 22;
        const down = 4 + rnd() * 22;
        add(svg, 'path', { d: `M${x} ${y - up}V${y + down}`, stroke: rnd() > 0.45 ? '#d9352f' : '#138a18', 'stroke-width': 3 });
    }
    spikes.trim().split(/\s+/).forEach(item => {
        const [x, top, bottom, type] = item.split(',');
        add(svg, 'path', { d: `M${x} ${top}V${bottom}`, stroke: type === 'r' ? '#d9352f' : '#138a18', 'stroke-width': 4 });
    });

    // trailing averages, one sample a pixel
    [[2, '#1c0d08', 4], [8, '#e8980c', 3], [16, '#f9686a', 3], [25, '#79bf4c', 3]].forEach(([span, color, width]) => {
        const points = [];
        for (let x = 12; x <= 1068; x++) {
            let sum = 0;
            for (let i = 0; i <= span; i++) sum += sample(price, x - i);
            points.push([x, (sum / (span + 1) + (rnd() - 0.5) * 18 / (span + 1)).toFixed(1)]);
        }
        line(svg, points, color, width);
    });
    [[m60, '#3a7ba8'], [m120, '#4f1458'], [m250, '#ad523d']].forEach(([parts, color]) => {
        const points = [];
        parts.forEach((part, third) => pairs(part).forEach(([x, y]) => points.push(grid(third, x, y))));
        line(svg, smooth(points, 8, 2), color, 3);
    });

    [30, 220, 398, 582, 762, 945, 991].forEach((x, i) => {
        const left = [13, 201, 381, 565, 745, 928, 973][i];
        add(svg, 'text', { x, y: 1500, fill: '#d93636', 'font-size': 36, 'text-anchor': 'middle' }, 'q');
        add(svg, 'path', { d: `M${left + 35} 1518h-34M${left + 14} 1512l-13 6 13 6`, fill: 'none', stroke: '#d93636', 'stroke-width': 2 });
    });

    add(svg, 'text', { x: 922, y: 857, fill: '#000', 'font-size': 30 }, '12.39');
    add(svg, 'path', { d: 'M1017 839h50M1049 830l18 9-18 9', fill: 'none', stroke: '#000', 'stroke-width': 3 });
    add(svg, 'text', { x: 227, y: 1523, fill: '#000', 'font-size': 30 }, '4.50');
    add(svg, 'path', { d: 'M205 1514h-50M172 1505l-18 9 18 9', fill: 'none', stroke: '#000', 'stroke-width': 3 });
    add(svg, 'rect', { x: 13, y: 827, width: 1054, height: 698, fill: 'none', stroke: '#e8e8e8', 'stroke-width': 2 });
}

const diff = pairs(`18,560 30,545 45,585 62,600 72,425 80,425 88,485 98,470 110,580 125,670 140,630 160,640 185,540 202,525 212,560
    227,710 245,620 270,575 278,490 290,540 308,520 325,570 340,625 355,590 370,530 380,400 385,300 391,320 400,500 414,675 422,560
    433,370 438,355 447,500 453,445 462,525 470,480 480,475 488,580 497,670 504,620 516,725 530,690 538,590 547,770 560,660 570,510
    580,530 587,495 598,600 606,350 612,272 618,430 625,470 630,430 640,560 652,690 664,740 675,520 685,420 700,500 710,620 722,705
    733,600 745,560 757,325 768,420 780,600 790,655 800,620 808,650 815,540 824,455 835,500 845,590 856,450 868,530 880,630 895,685
    910,625 922,655 930,635 938,690 950,580 960,560 975,600 988,580 994,515 1003,590 1010,700 1018,810 1028,650 1038,560 1046,545
    1055,580 1068,610 1080,570 1092,620 1105,635 1118,680 1130,640 1147,565 1165,625 1178,600 1187,490 1193,480 1197,495 1205,470
    1217,470 1228,545 1240,510 1250,600 1262,680 1272,610 1283,585 1297,610 1305,450 1313,285 1320,500 1330,595 1343,535 1357,605
    1368,570 1376,520 1384,380 1392,450 1402,510 1410,475 1420,465 1432,640 1442,690 1455,600 1468,570 1477,480 1485,560 1490,485
    1497,560 1510,610 1522,530 1535,520 1545,560 1550,480`);

function drawMacd() {
    const svg = document.getElementById('macd');
    add(svg, 'path', { d: 'M18 447h1532', stroke: '#ececec', 'stroke-width': 4, 'stroke-dasharray': '6 5' });
    const black = [];
    const dea = [];
    let fast = 560;
    let slow = 570;
    for (let x = 18; x <= 1550; x += 2) {
        const y = sample(diff, x);
        fast += (y - fast) * 0.42;
        slow += (y - slow) * 0.14;
        black.push([x, y + (rnd() - 0.5) * 14]);
        dea.push([x, fast]);
        const bar = (y - slow) * 1.35 + (rnd() - 0.5) * 12;
        add(svg, 'path', { d: `M${x} 582v${bar}`, stroke: bar < 0 ? '#e53232' : '#339a1e', 'stroke-width': 3 });
    }
    line(svg, black, '#333', 3);
    line(svg, dea, '#ee7440', 3);
}

const mid = pairs(`18,700 65,705 85,620 100,592 115,605 140,665 165,690 190,665 210,650 220,665 232,722 270,728 285,690 320,658 355,695
    370,680 385,600 398,520 408,570 420,600 432,560 445,455 462,460 480,420 500,480 520,545 540,565 560,635 580,560 600,550 612,470
    628,395 645,440 668,525 685,430 703,410 715,450 730,485 748,465 760,370 771,325 785,390 805,420 820,380 835,345 848,350 869,298
    885,350 905,390 925,410 945,447 965,430 988,438 1000,418 1015,500 1025,540 1045,490 1065,505 1085,510 1105,540 1135,600 1155,575
    1180,605 1200,530 1215,505 1248,490 1265,530 1300,547 1315,450 1327,425 1340,470 1370,465 1385,400 1400,355 1425,315 1450,390
    1475,355 1497,330 1517,350 1535,320 1550,305`);
const upper = pairs(`18,660 45,670 65,650 72,570 80,540 88,555 113,553 135,645 160,665 180,640 200,625 220,605 235,700 268,715 275,635
    300,645 315,635 340,640 355,670 368,650 378,560 385,440 391,415 403,440 415,540 425,545 432,420 440,365 452,385 475,365 490,355
    505,460 520,450 530,520 538,530 547,475 562,540 585,520 600,510 606,340 614,265 628,335 642,340 668,470 677,400 684,340 700,380
    715,385 730,430 747,425 753,255 762,235 775,265 790,380 805,395 822,280 840,300 850,290 860,237 875,265 900,370 925,375 945,400
    985,415 1000,380 1009,335 1020,410 1035,465 1060,470 1085,487 1100,490 1135,555 1180,570 1190,500 1210,465 1245,455 1265,480
    1300,525 1310,280 1328,290 1338,420 1372,430 1384,300 1410,280 1435,255 1455,350 1470,340 1480,270 1512,300 1530,285 1545,270 1550,200`);
const lower = pairs(`18,735 40,720 65,720 72,775 88,640 110,640 130,700 160,705 185,700 213,675 222,740 230,777 240,740 270,735 276,762
    295,720 318,680 340,715 378,712 384,738 400,600 412,640 422,625 432,685 450,515 465,520 480,480 497,550 505,505 522,610 538,580
    545,690 554,727 580,595 600,600 609,675 625,465 640,490 662,575 677,605 690,480 707,445 720,540 735,530 747,490 755,550 771,380
    790,455 802,435 820,470 832,390 848,385 857,410 870,335 895,410 920,420 940,485 965,445 985,465 1003,475 1018,635 1025,600
    1035,600 1048,510 1065,540 1090,540 1107,565 1125,630 1150,610 1180,620 1189,655 1213,535 1245,540 1262,580 1303,570 1311,655
    1325,570 1345,490 1375,480 1384,525 1400,430 1425,355 1442,440 1455,410 1475,430 1500,400 1520,395 1540,345 1550,350`);

function drawBoll() {
    const svg = document.getElementById('boll');
    add(svg, 'path', { d: 'M18 411h1532', stroke: '#ececec', 'stroke-width': 4, 'stroke-dasharray': '6 5' });
    // the candles swing round the middle band
    let swing = 0;
    for (let x = 20; x < 1550; x += 3) {
        swing = swing * 0.8 + (rnd() - 0.5) * 50;
        const y = (sample(mid, x + 8) + sample(mid, x)) / 2 + swing;
        const top = Math.max(y - 10 - rnd() * 35, sample(upper, x));
        const bottom = Math.min(y + 10 + rnd() * 35, sample(lower, x) - 5);
        add(svg, 'path', { d: `M${x} ${top}V${Math.max(bottom, top + 15)}`, stroke: rnd() > 0.35 ? '#cf4038' : '#3f6d22', 'stroke-width': 3 });
    }
    [[385, 435, 600], [606, 305, 540], [855, 240, 400], [1188, 465, 600], [1311, 275, 500], [1384, 217, 420], [1488, 230, 390], [1550, 197, 300], [1018, 480, 635]].forEach(([x, top, bottom], i) =>
        add(svg, 'path', { d: `M${x} ${top}V${bottom}`, stroke: i % 4 ? '#3f6d22' : '#cf4038', 'stroke-width': 4 }));
    line(svg, smooth(upper, 4, 14), '#d93a36', 3);
    line(svg, smooth(lower, 4, 8), '#128c17', 3);
    line(svg, smooth(mid, 8, 5), '#5590da', 3);
}

drawKline();
drawMacd();
drawBoll();
```
